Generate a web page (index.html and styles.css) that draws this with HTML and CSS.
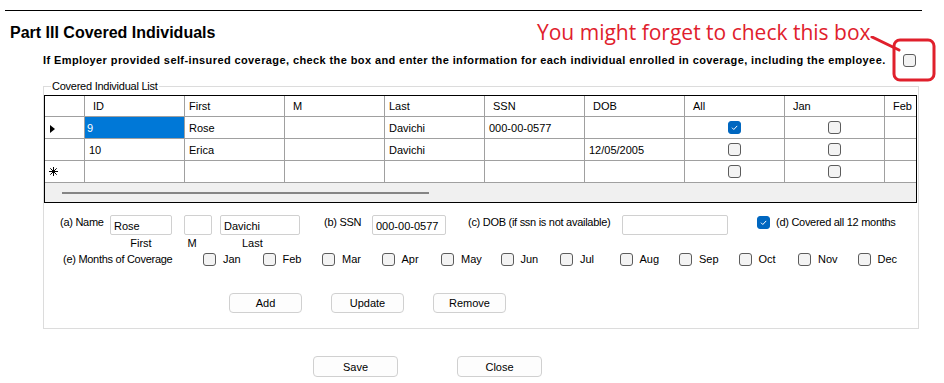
FILE: index.html
```html
<!DOCTYPE html>
<html lang="en">
<head>
    <meta charset="UTF-8">
    <meta name="viewport" content="width=device-width, initial-scale=1.0">
    <title>Part III Covered Individuals</title>
    <link rel="stylesheet" href="styles.css">
</head>
<body>
    <div class="page">
        <hr class="rule">
        <h2 class="title">Part III Covered Individuals</h2>

        <div class="intro">
            <p class="intro-text">If Employer provided self-insured coverage, check the box and enter the information for each individual enrolled in coverage, including the employee.</p>
            <span class="cb"></span>
        </div>

        <fieldset class="group">
            <legend>Covered Individual List</legend>
            <div class="grid">
                <table>
                    <thead>
                        <tr>
                            <th class="rowhead"></th>
                            <th>ID</th>
                            <th class="tight">First</th>
                            <th>M</th>
                            <th class="tight">Last</th>
                            <th>SSN</th>
                            <th>DOB</th>
                            <th>All</th>
                            <th>Jan</th>
                            <th>Feb</th>
                        </tr>
                    </thead>
                    <tbody>
                        <tr>
                            <td class="rowhead"><span class="current"></span></td>
                            <td class="selected">9</td>
                            <td>Rose</td>
                            <td></td>
                            <td>Davichi</td>
                            <td>000-00-0577</td>
                            <td></td>
                            <td class="check"><span class="cb on"></span></td>
                            <td class="check"><span class="cb"></span></td>
                            <td></td>
                        </tr>
                        <tr>
                            <td class="rowhead"></td>
                            <td>10</td>
                            <td>Erica</td>
                            <td></td>
                            <td>Davichi</td>
                            <td></td>
                            <td>12/05/2005</td>
                            <td class="check"><span class="cb"></span></td>
                            <td class="check"><span class="cb"></span></td>
                            <td></td>
                        </tr>
                        <tr>
                            <td class="rowhead">
                                <svg class="newrow" width="9" height="9" viewBox="0 0 9 9">
                                    <path d="M4.5 0v9M0 4.5h9M1.3 1.3l6.4 6.4M7.7 1.3l-6.4 6.4" stroke="#000" stroke-width="1"/>
                                </svg>
                            </td>
                            <td></td>
                            <td></td>
                            <td></td>
                            <td></td>
                            <td></td>
                            <td></td>
                            <td class="check"><span class="cb"></span></td>
                            <td class="check"><span class="cb"></span></td>
                            <td></td>
                        </tr>
                    </tbody>
                </table>
                <div class="hscroll"><span class="thumb"></span></div>
            </div>

            <div class="form-row">
                <span class="lbl lbl-name">(a) Name</span>
                <input class="txt txt-first" type="text" value="Rose">
                <input class="txt txt-m" type="text" value="">
                <input class="txt txt-last" type="text" value="Davichi">
                <span class="lbl lbl-ssn">(b) SSN</span>
                <input class="txt txt-ssn" type="text" value="000-00-0577">
                <span class="lbl lbl-dob">(c) DOB (if ssn is not available)</span>
                <input class="txt txt-dob" type="text" value="">
                <span class="cb on all-cb"></span>
                <span class="lbl">(d) Covered all 12 months</span>
            </div>

            <div class="sub-row">
                <span class="sub-first">First</span>
                <span class="sub-m">M</span>
                <span class="sub-last">Last</span>
            </div>

            <div class="months-row">
                <span class="lbl lbl-months">(e) Months of Coverage</span>
                <div class="months">
                    <label class="month"><span class="cb"></span>Jan</label>
                    <label class="month"><span class="cb"></span>Feb</label>
                    <label class="month"><span class="cb"></span>Mar</label>
                    <label class="month"><span class="cb"></span>Apr</label>
                    <label class="month"><span class="cb"></span>May</label>
                    <label class="month"><span class="cb"></span>Jun</label>
                    <label class="month"><span class="cb"></span>Jul</label>
                    <label class="month"><span class="cb"></span>Aug</label>
                    <label class="month"><span class="cb"></span>Sep</label>
                    <label class="month"><span class="cb"></span>Oct</label>
                    <label class="month"><span class="cb"></span>Nov</label>
                    <label class="month"><span class="cb"></span>Dec</label>
                </div>
            </div>

            <div class="buttons">
                <button class="btn">Add</button>
                <button class="btn">Update</button>
                <button class="btn">Remove</button>
            </div>
        </fieldset>

        <div class="actions">
            <button class="btn btn-wide">Save</button>
            <button class="btn btn-wide">Close</button>
        </div>

        <!-- red annotation drawn over the form -->
        <div class="note">
            <span class="note-text">You might forget to check this box</span>
            <svg class="note-mark" width="80" height="50" viewBox="0 0 80 50">
                <line x1="4" y1="1" x2="31" y2="14" stroke="#e0202c" stroke-width="3" stroke-linecap="round"/>
                <rect x="26" y="4" width="40" height="40" rx="6" fill="none" stroke="#e0202c" stroke-width="3"/>
            </svg>
        </div>
    </div>
</body>
</html>
```

FILE: styles.css
```css
body {
    margin: 0;
    background: #fff;
    color: #000;
    font-family: "Liberation Sans", Arial, sans-serif;
    font-size: 11px;
}
.page {
    position: relative;
    width: 944px;
    height: 383px;
    overflow: hidden;
}
.rule {
    margin: 10px 0 0 5px;
    width: 917px;
    height: 0;
    border: 0;
    border-top: 1px solid #000;
}
.title {
    margin: 13px 0 0 10px;
    font-size: 16px;
    line-height: 18px;
    font-weight: bold;
}
.intro {
    display: flex;
    align-items: center;
    margin: 12px 0 0 43px;
    height: 13px;
}
.intro-text {
    margin: 0;
    width: 860px;
    font-weight: bold;
    line-height: 13px;
    letter-spacing: 0.4px;
    white-space: nowrap;
}

/* checkbox look */
.cb {
    display: inline-block;
    box-sizing: border-box;
    width: 13px;
    height: 13px;
    border: 1px solid #5c5c5c;
    border-radius: 3px;
    background: #f3f3f3;
    flex: none;
}
.cb.on {
    border-color: #0067c0;
    background: #0067c0 url("data:image/svg+xml,%3Csvg xmlns='http://www.w3.org/2000/svg' width='11' height='11'%3E%3Cpath d='M3 5.7l1.8 1.8 3.4-3.6' fill='none' stroke='white' stroke-width='1'/%3E%3C/svg%3E") center no-repeat;
}

.group {
    margin: 13px 0 0 43px;
    padding: 0 0 15px 0;
    width: 874px;
    border: 1px solid #dcdcdc;
}
.group legend {
    margin-left: 7px;
    padding: 0 1px;
    line-height: 13px;
    letter-spacing: -0.25px;
}

.grid {
    margin-top: 2px;
    width: 871px;
    border: 1px solid #000;
    background: #f0f0f0;
    overflow: hidden;
}
.grid table {
    border-collapse: separate;
    border-spacing: 0;
    table-layout: fixed;
    width: 940px;
    background: #fff;
}
.grid th,
.grid td {
    width: 99px;
    padding: 0 0 0 4px;
    border-right: 1px solid #a0a0a0;
    border-bottom: 1px solid #a0a0a0;
    text-align: left;
    font-weight: normal;
    white-space: nowrap;
    overflow: hidden;
}
.grid th {
    height: 20px;
    padding-left: 8px;
    width: 91px;
}
.grid th.tight {
    padding-left: 4px;
    width: 95px;
}
.grid td {
    height: 21px;
    width: 95px;
}
.grid .rowhead {
    width: 35px;
    padding-left: 4px;
}
.grid td.selected {
    background: #0078d7;
    color: #fff;
    padding-left: 2px;
}
.grid td.check {
    text-align: center;
    padding: 0;
}
.grid td.check .cb {
    vertical-align: middle;
}
.current {
    display: inline-block;
    margin-left: 1px;
    border-left: 5px solid #000;
    border-top: 4px solid transparent;
    border-bottom: 4px solid transparent;
    vertical-align: middle;
}
.newrow {
    display: block;
    margin-left: 0;
}
.hscroll {
    display: flex;
    align-items: center;
    height: 19px;
}
.thumb {
    margin-left: 17px;
    width: 367px;
    height: 2px;
    background: #858585;
}

.form-row {
    display: flex;
    align-items: flex-start;
    margin-top: 12px;
    height: 20px;
}
.lbl {
    line-height: 13px;
    padding-top: 1px;
    white-space: nowrap;
    letter-spacing: -0.28px;
}
.lbl-name {
    margin-left: 16px;
    width: 50px;
}
.txt {
    box-sizing: border-box;
    height: 20px;
    margin: 0;
    padding: 2px 3px 0;
    border: 1px solid #d0d0d0;
    border-radius: 2px;
    background: #fff;
    font-family: inherit;
    font-size: 11px;
}
.txt-first { width: 62px; margin-right: 12px; }
.txt-m { width: 28px; margin-right: 8px; }
.txt-last { width: 80px; margin-right: 24px; }
.lbl-ssn { width: 48px; }
.txt-ssn { width: 74px; margin-right: 22px; }
.lbl-dob { width: 154px; }
.txt-dob { width: 106px; margin-right: 29px; }
.all-cb { margin: 1px 6px 0 0; }

.sub-row {
    display: flex;
    height: 13px;
    line-height: 13px;
    margin-top: 2px;
}
.sub-first {
    margin-left: 66px;
    width: 62px;
    text-align: center;
}
.sub-m {
    margin-left: 12px;
    width: 16px;
    text-align: center;
}
.sub-last {
    margin-left: 42px;
}

.months-row {
    display: flex;
    align-items: center;
    margin-top: 2px;
    height: 14px;
}
.lbl-months {
    margin-left: 19px;
    width: 140px;
    padding: 0;
}
.months {
    display: grid;
    grid-template-columns: repeat(12, 59.5px);
}
.month {
    display: flex;
    align-items: center;
    gap: 7px;
}

.buttons {
    display: flex;
    gap: 29px;
    margin: 27px 0 0 185px;
}
.btn {
    box-sizing: border-box;
    width: 73px;
    height: 20px;
    padding: 0;
    border: 1px solid #d0d0d0;
    border-radius: 4px;
    background: #fdfdfd;
    font-family: inherit;
    font-size: 11px;
    color: #000;
}
.actions {
    display: flex;
    gap: 59px;
    margin: 27px 0 0 313px;
}
.btn-wide {
    width: 85px;
    height: 21px;
}

.note {
    position: absolute;
    top: 18px;
    left: 537px;
    display: flex;
    align-items: flex-start;
}
.note-text {
    font-family: "Open Sans", sans-serif;
    font-size: 21px;
    line-height: 28px;
    color: #e0202c;
    white-space: nowrap;
}
.note-mark {
    margin: 18px 0 0 -3px;
}
```
